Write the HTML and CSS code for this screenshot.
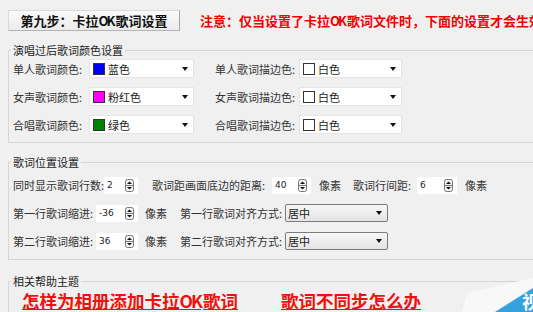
FILE: index.html
```html
<!DOCTYPE html>
<html lang="zh-CN">
<head>
<meta charset="utf-8">
<title>卡拉OK歌词设置</title>
<link rel="stylesheet" href="styles.css">
</head>
<body>
<div class="page">
  <header class="head">
    <div class="step">第九步：卡拉<span class="ok">OK</span>歌词设置</div>
    <div class="note">注意：仅当设置了卡拉<span class="ok">OK</span>歌词文件时，下面的设置才会生效</div>
  </header>

  <fieldset class="group g1">
    <legend>演唱过后歌词颜色设置</legend>
    <div class="colors">
      <span class="lbl">单人歌词颜色:</span>
      <div class="dd dd-l"><i class="sw sw-blue"></i><span class="ddt">蓝色</span><b class="arr"></b></div>
      <span class="lbl">单人歌词描边色:</span>
      <div class="dd dd-r"><i class="sw sw-white"></i><span class="ddt">白色</span><b class="arr"></b></div>

      <span class="lbl">女声歌词颜色:</span>
      <div class="dd dd-l"><i class="sw sw-pink"></i><span class="ddt">粉红色</span><b class="arr"></b></div>
      <span class="lbl">女声歌词描边色:</span>
      <div class="dd dd-r"><i class="sw sw-white"></i><span class="ddt">白色</span><b class="arr"></b></div>

      <span class="lbl">合唱歌词颜色:</span>
      <div class="dd dd-l"><i class="sw sw-green"></i><span class="ddt">绿色</span><b class="arr"></b></div>
      <span class="lbl">合唱歌词描边色:</span>
      <div class="dd dd-r"><i class="sw sw-white"></i><span class="ddt">白色</span><b class="arr"></b></div>
    </div>
  </fieldset>

  <fieldset class="group g2">
    <legend>歌词位置设置</legend>
    <div class="row">
      <span class="lbl w91">同时显示歌词行数:</span>
      <div class="spin w34"><span class="num">2</span><svg class="spn" width="9" height="13" viewBox="0 0 9 13"><rect x="0.5" y="0.5" width="8" height="12" rx="2" fill="#f2f2f2" stroke="#777"/><line x1="1" y1="6.5" x2="8" y2="6.5" stroke="#777"/><path d="M2 5 L4.5 2.5 L7 5 Z" fill="#111"/><path d="M2 8 L4.5 10.5 L7 8 Z" fill="#111"/></svg></div>
      <span class="lbl ml14 w120">歌词距画面底边的距离:</span>
      <div class="spin w39"><span class="num">40</span><svg class="spn" width="9" height="13" viewBox="0 0 9 13"><rect x="0.5" y="0.5" width="8" height="12" rx="2" fill="#f2f2f2" stroke="#777"/><line x1="1" y1="6.5" x2="8" y2="6.5" stroke="#777"/><path d="M2 5 L4.5 2.5 L7 5 Z" fill="#111"/><path d="M2 8 L4.5 10.5 L7 8 Z" fill="#111"/></svg></div>
      <span class="unit ml8">像素</span>
      <span class="lbl ml12 w64">歌词行间距:</span>
      <div class="spin w40"><span class="num">6</span><svg class="spn" width="9" height="13" viewBox="0 0 9 13"><rect x="0.5" y="0.5" width="8" height="12" rx="2" fill="#f2f2f2" stroke="#777"/><line x1="1" y1="6.5" x2="8" y2="6.5" stroke="#777"/><path d="M2 5 L4.5 2.5 L7 5 Z" fill="#111"/><path d="M2 8 L4.5 10.5 L7 8 Z" fill="#111"/></svg></div>
      <span class="unit ml8">像素</span>
    </div>
    <div class="row">
      <span class="lbl w83">第一行歌词缩进:</span>
      <div class="spin w42"><span class="num">-36</span><svg class="spn" width="9" height="13" viewBox="0 0 9 13"><rect x="0.5" y="0.5" width="8" height="12" rx="2" fill="#f2f2f2" stroke="#777"/><line x1="1" y1="6.5" x2="8" y2="6.5" stroke="#777"/><path d="M2 5 L4.5 2.5 L7 5 Z" fill="#111"/><path d="M2 8 L4.5 10.5 L7 8 Z" fill="#111"/></svg></div>
      <span class="unit ml7">像素</span>
      <span class="lbl ml13 w105">第一行歌词对齐方式:</span>
      <div class="sel"><span class="ddt">居中</span><b class="arr"></b></div>
    </div>
    <div class="row">
      <span class="lbl w83">第二行歌词缩进:</span>
      <div class="spin w42"><span class="num">36</span><svg class="spn" width="9" height="13" viewBox="0 0 9 13"><rect x="0.5" y="0.5" width="8" height="12" rx="2" fill="#f2f2f2" stroke="#777"/><line x1="1" y1="6.5" x2="8" y2="6.5" stroke="#777"/><path d="M2 5 L4.5 2.5 L7 5 Z" fill="#111"/><path d="M2 8 L4.5 10.5 L7 8 Z" fill="#111"/></svg></div>
      <span class="unit ml7">像素</span>
      <span class="lbl ml13 w105">第二行歌词对齐方式:</span>
      <div class="sel"><span class="ddt">居中</span><b class="arr"></b></div>
    </div>
  </fieldset>

  <fieldset class="group g3">
    <legend>相关帮助主题</legend>
    <div class="links">
      <a class="hl" href="#">怎样为相册添加卡拉<span class="ok">OK</span>歌词</a>
      <a class="hl" href="#">歌词不同步怎么办</a>
    </div>
  </fieldset>

  <svg class="logo" width="80" height="40" viewBox="0 0 80 40">
    <polygon points="9,40 14,21 80,6 80,40" fill="#f8f8f8"/>
    <polygon points="42,40 80,16 80,40" fill="#35a2de"/>
    <text x="69" y="37" font-size="18" font-weight="bold" fill="#fff" font-family="Noto Sans CJK SC, sans-serif">视</text>
  </svg>
</div>
</body>
</html>
```

FILE: styles.css
```css
* { box-sizing: border-box; }
html, body { margin: 0; padding: 0; }
body {
  width: 533px;
  height: 312px;
  overflow: hidden;
  background: #f0f0f0;
  font-family: "Noto Sans CJK SC", "Noto Sans", sans-serif;
  font-size: 11px;
  line-height: 16px;
  color: #333;
}
.page {
  position: relative;
  height: 312px;
  overflow: hidden;
  padding-top: 10px;
}
.head {
  display: flex;
  align-items: center;
  height: 21px;
  padding-left: 8px;
}
.step {
  flex: none;
  width: 172px;
  height: 21px;
  display: flex;
  align-items: center;
  justify-content: center;
  font-size: 13px;
  font-weight: bold;
  color: #111;
  background: linear-gradient(#fbfbfb, #ebebeb);
  border: 1px solid #dadada;
  border-right-color: #a6a6a6;
  border-bottom-color: #b4b4b4;
}
.note {
  flex: none;
  margin-left: 20px;
  color: #f20000;
  font-size: 13px;
  font-weight: bold;
  white-space: nowrap;
}
.ok { letter-spacing: -2px; margin-right: 2px; }
.group {
  margin: 11px -30px 0 8px;
  padding: 1px 0 8px 4px;
  border: 1px solid #d6d6d6;
  min-width: 0;
}
.group legend {
  padding: 0 2px;
  margin-left: -2px;
  color: #222;
  line-height: 16px;
}
.g2 { padding-top: 6px; padding-bottom: 9px; }
.g3 { margin-top: 13px; padding-top: 3px; height: 80px; }

.colors {
  display: grid;
  grid-template-columns: 76px 126px 84px 103px;
  grid-auto-rows: 19px;
  row-gap: 9px;
  align-items: center;
}
.lbl { white-space: nowrap; flex: none; }
.dd {
  display: flex;
  align-items: center;
  height: 19px;
  background: #fff;
  border: 1px solid #e4e4e4;
  padding: 0 5px 0 3px;
}
.dd-l { width: 105px; }
.dd-r { width: 103px; }
.sw {
  display: block;
  width: 12px;
  height: 12px;
  border: 1px solid #333;
  margin-right: 3px;
  flex: none;
}
.sw-blue { background: #0000f0; }
.sw-pink { background: #ff00ff; }
.sw-green { background: #008000; }
.sw-white { background: #fff; }
.ddt { color: #222; }
.arr {
  margin-left: auto;
  width: 0;
  height: 0;
  border-left: 3.5px solid transparent;
  border-right: 3.5px solid transparent;
  border-top: 4px solid #111;
}

.row {
  display: flex;
  align-items: center;
  height: 18px;
  margin-bottom: 10px;
}
.row:last-child { margin-bottom: 0; }
.spin {
  flex: none;
  display: flex;
  align-items: center;
  height: 17px;
  background: #fff;
  padding: 0 4px 0 3px;
}
.num {
  flex: 1;
  font-family: "DejaVu Sans", sans-serif;
  font-size: 9px;
  color: #222;
}
.spn { flex: none; display: block; }
.unit { flex: none; }
.sel {
  flex: none;
  display: flex;
  align-items: center;
  width: 103px;
  height: 18px;
  padding: 0 5px 0 2px;
  border: 1px solid #7c7c7c;
  border-radius: 2px;
  background: linear-gradient(#f7f7f7, #e4e4e4);
}

.w34 { width: 34px; }
.w39 { width: 39px; }
.w40 { width: 40px; }
.w42 { width: 42px; }
.w64 { width: 64px; }
.w83 { width: 83px; }
.w91 { width: 91px; }
.w105 { width: 105px; }
.w120 { width: 120px; }
.ml7 { margin-left: 7px; }
.ml8 { margin-left: 8px; }
.ml12 { margin-left: 12px; }
.ml13 { margin-left: 13px; }
.ml14 { margin-left: 14px; }

.links {
  display: grid;
  grid-template-columns: 259px auto;
  padding-left: 9px;
}
.hl {
  justify-self: start;
  color: #f01010;
  font-size: 17.5px;
  font-weight: bold;
  line-height: 18px;
  text-decoration: underline;
  text-decoration-thickness: 1px;
  text-underline-offset: 1px;
  white-space: nowrap;
}
.logo {
  position: absolute;
  right: 0;
  bottom: 0;
  display: block;
}
```
